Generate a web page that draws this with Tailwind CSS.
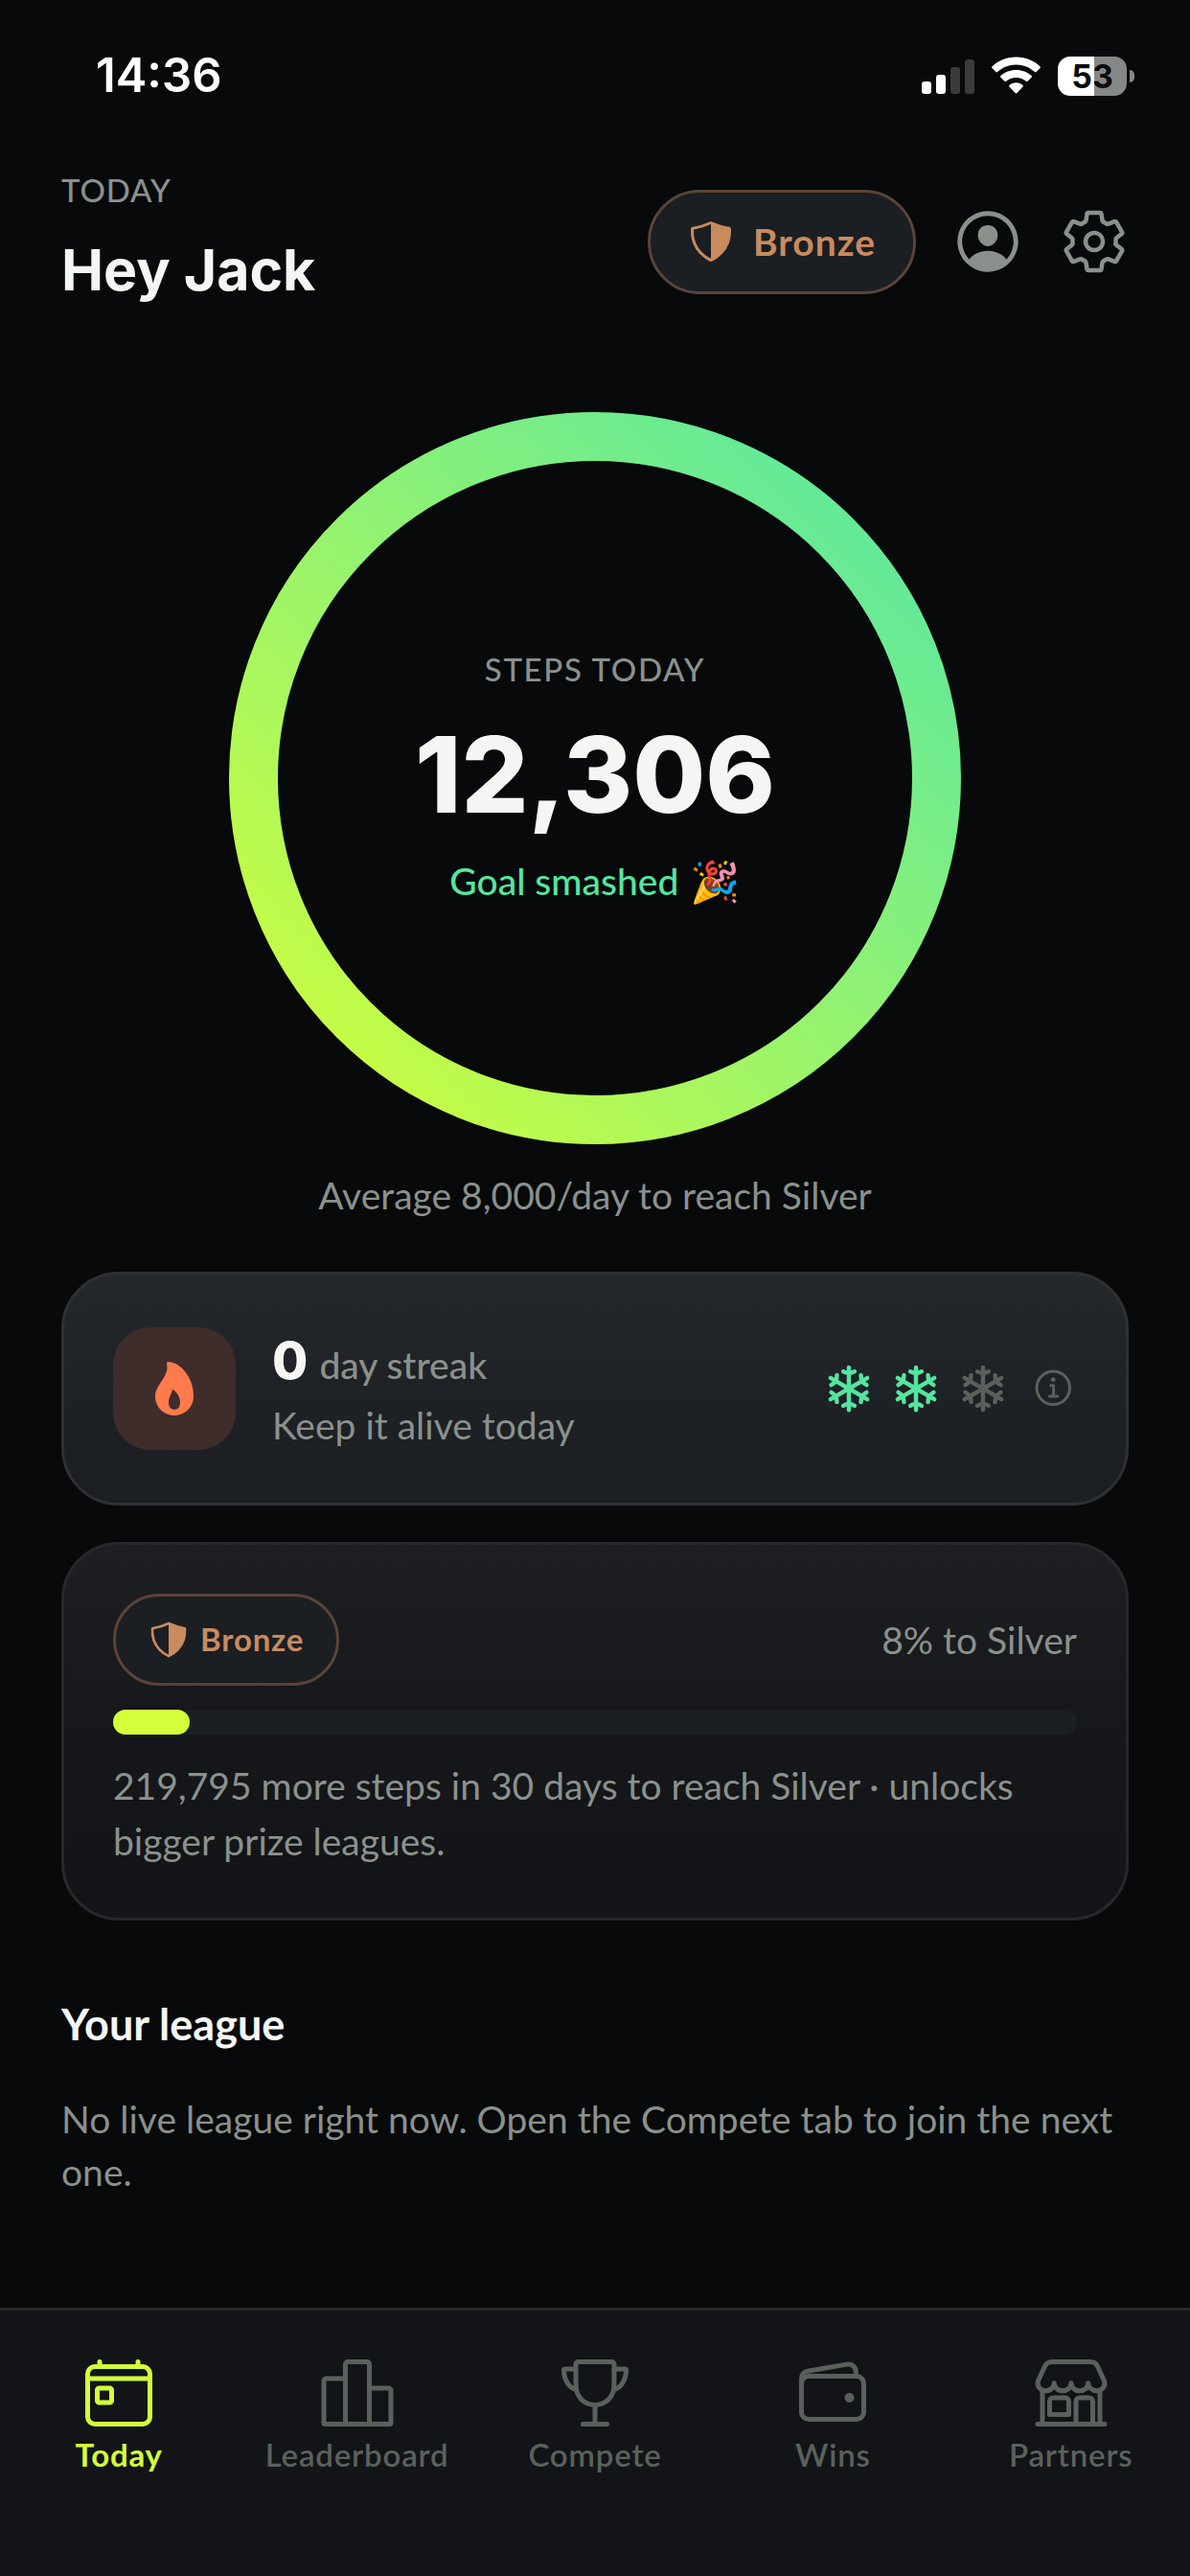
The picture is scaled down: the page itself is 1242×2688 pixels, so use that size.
<!DOCTYPE html>
<html lang="en">
<head>
    <meta charset="UTF-8">
    <meta name="viewport" content="width=device-width, initial-scale=1.0">
    <title>Today</title>
    <script src="https://cdn.jsdelivr.net/npm/@tailwindcss/browser@4"></script>
</head>
<body class="bg-[#07090b] text-[#f4f6f3] font-['Lato','Noto_Color_Emoji',sans-serif] min-h-screen flex flex-col">

    <!-- Shared icons -->
    <svg class="hidden">
        <symbol id="shield" viewBox="0 0 512 512">
            <path d="M463.1 112.37C373.68 96.33 336.71 84.45 256 48c-80.71 36.45-117.68 48.33-207.1 64.37C32.7 369.13 240.58 457.79 256 464c15.42-6.21 223.3-94.87 207.1-351.63z" fill="none" stroke="currentColor" stroke-width="32" stroke-linejoin="round"/>
            <path d="M256 48c80.71 36.45 117.68 48.33 207.1 64.37C479.3 369.13 271.42 457.79 256 464z" fill="currentColor"/>
        </symbol>
        <symbol id="snow" viewBox="0 0 512 512">
            <g id="snow-arm" fill="none" stroke="currentColor" stroke-width="44" stroke-linecap="round">
                <path d="M256 256V38M198 80a112 112 0 00116 0"/>
            </g>
            <use href="#snow-arm" transform="rotate(60 256 256)"/>
            <use href="#snow-arm" transform="rotate(120 256 256)"/>
            <use href="#snow-arm" transform="rotate(180 256 256)"/>
            <use href="#snow-arm" transform="rotate(240 256 256)"/>
            <use href="#snow-arm" transform="rotate(300 256 256)"/>
        </symbol>
    </svg>

    <!-- Status bar -->
    <div class="h-[142px] pt-4 pl-[100px] pr-[58px] flex items-center justify-between">
        <div class="font-['Inter',sans-serif] font-semibold text-[49px] leading-[60px] text-white">14:36</div>
        <div class="flex items-center gap-[18px]">
            <svg class="w-[55px] h-[41px]" viewBox="0 0 55 41" fill="#fff">
                <rect x="0" y="26" width="10" height="13" rx="3"/>
                <rect x="15" y="19" width="10" height="20" rx="3"/>
                <rect x="30" y="11" width="10" height="28" rx="3" fill="#3a3b3d"/>
                <rect x="45" y="3" width="10" height="36" rx="3" fill="#3a3b3d"/>
            </svg>
            <svg class="w-[51px] h-[41px]" viewBox="0 0 51 41" fill="#fff">
                <path d="M25.5.5C35.5.5 44.500 4.400 50.600 10.500Q51.300 11.300 50.600 12.100L46.600 16.100Q45.700 16.900 44.900 16.100C39.900 11.300 33 8.500 25.500 8.500S11.100 11.300 6.100 16.100Q5.300 16.900 4.400 16.100L.4 12.100Q-.3 11.300 .4 10.500C6.500 4.400 15.500 .5 25.500 .5z"/>
                <path d="M25.500 14C31.700 14 37.400 16.300 41.600 20.100Q42.400 20.900 41.600 21.700L37.500 25.800Q36.700 26.500 35.900 25.800C33.100 23.300 29.500 21.900 25.500 21.900S17.900 23.300 15.100 25.800Q14.300 26.500 13.500 25.800L9.400 21.700Q8.600 20.900 9.400 20.100C13.600 16.300 19.300 14 25.500 14z"/>
                <path d="M25.500 27.300C28.200 27.300 30.700 28.300 32.600 29.900Q33.500 30.700 32.600 31.600L26.400 38Q25.500 38.900 24.600 38L18.400 31.600Q17.500 30.700 18.400 29.900C20.300 28.300 22.800 27.300 25.500 27.300z"/>
            </svg>
            <div class="flex items-center gap-[3px]">
                <div class="w-[72px] h-[41px] rounded-[13px] bg-linear-to-r from-white from-53% to-[#868887] to-53% flex items-center justify-center font-['Inter',sans-serif] font-bold text-[34px] leading-[41px] text-[#0a0b0c]">53</div>
                <div class="w-[5px] h-[13px] rounded-r-full bg-[#868887]"></div>
            </div>
        </div>
    </div>

    <!-- Header -->
    <header class="px-16 pt-9 flex items-center justify-between">
        <div>
            <p class="text-[33px] leading-10 font-medium tracking-wide text-[#8a918c]">TODAY</p>
            <h1 class="mt-5 font-['Inter',sans-serif] font-bold text-[59px] leading-[88px]">Hey Jack</h1>
        </div>
        <div class="flex items-center gap-9">
            <button class="h-[109px] px-[39px] flex items-center gap-5 rounded-full border-3 border-[#5a4437] bg-[#1b1e23] text-[#c98b5e] text-[39px] font-bold tracking-wide">
                <svg class="size-12"><use href="#shield"/></svg>
                Bronze
            </button>
            <button aria-label="Profile" class="text-[#8a918c]">
                <svg class="size-[78px]" viewBox="0 0 512 512" fill="currentColor">
                    <path d="M258.9 48C141.92 46.42 46.42 141.92 48 258.9c1.56 112.19 92.91 203.54 205.1 205.1 117 1.6 212.48-93.9 210.88-210.88C462.44 140.91 371.09 49.56 258.9 48zm126.42 327.25a4 4 0 01-6.14-.32 124.27 124.27 0 00-32.35-29.59C321.37 329 289.11 320 256 320s-65.37 9-90.83 25.34a124.24 124.24 0 00-32.35 29.58 4 4 0 01-6.14.32A175.32 175.32 0 0180 259c-1.63-97.31 78.22-178.76 175.57-179S432 158.81 432 256a175.32 175.32 0 01-46.68 119.25z"/>
                    <path d="M256 144c-19.72 0-37.55 7.39-50.22 20.82s-19 32-17.57 51.93C191.11 256 221.52 288 256 288s64.83-32 67.79-71.24c1.48-19.74-4.8-38.14-17.68-51.82C293.39 151.44 275.59 144 256 144z"/>
                </svg>
            </button>
            <button aria-label="Settings" class="text-[#8a918c]">
                <svg class="size-[72px]" viewBox="0 0 512 512" fill="none" stroke="currentColor" stroke-width="32" stroke-linecap="round" stroke-linejoin="round">
                    <path d="M262.29 192.31a64 64 0 1057.4 57.4 64.13 64.13 0 00-57.4-57.4zM416.39 256a154.34 154.34 0 01-1.53 20.79l45.21 35.46a10.81 10.81 0 012.45 13.75l-42.77 74a10.81 10.81 0 01-13.14 4.59l-44.9-18.08a16.11 16.11 0 00-15.17 1.75A164.48 164.48 0 01325 400.8a15.94 15.94 0 00-8.82 12.14l-6.73 47.89a11.08 11.08 0 01-10.68 9.17h-85.54a11.11 11.11 0 01-10.69-8.87l-6.72-47.82a16.07 16.07 0 00-9-12.22 155.3 155.3 0 01-21.46-12.57 16 16 0 00-15.11-1.71l-44.89 18.07a10.81 10.81 0 01-13.14-4.58l-42.77-74a10.8 10.8 0 012.45-13.75l38.21-30a16.05 16.05 0 006-14.08c-.36-4.17-.58-8.33-.58-12.5s.21-8.27.58-12.35a16 16 0 00-6.07-13.94l-38.19-30A10.81 10.81 0 0149.48 186l42.77-74a10.81 10.81 0 0113.14-4.59l44.9 18.08a16.11 16.11 0 0015.17-1.75A164.48 164.48 0 01187 111.2a15.94 15.94 0 008.82-12.14l6.73-47.89A11.08 11.08 0 01213.23 42h85.54a11.11 11.11 0 0110.69 8.87l6.72 47.82a16.07 16.07 0 009 12.22 155.3 155.3 0 0121.46 12.57 16 16 0 0015.11 1.71l44.89-18.07a10.81 10.81 0 0113.14 4.58l42.77 74a10.8 10.8 0 01-2.45 13.75l-38.21 30a16.05 16.05 0 00-6.05 14.08c.33 4.14.55 8.3.55 12.47z"/>
                </svg>
            </button>
        </div>
    </header>

    <main class="flex-1 px-16 pb-16">
        <!-- Step ring -->
        <section class="mt-[104px] flex flex-col items-center">
            <div class="grid place-items-center">
                <svg class="size-[764px] col-start-1 row-start-1" viewBox="0 0 764 764">
                    <defs>
                        <linearGradient id="ring" x1="0" y1="1" x2="1" y2="0">
                            <stop offset="0" stop-color="#d4ff3a"/>
                            <stop offset="1" stop-color="#54e6a5"/>
                        </linearGradient>
                    </defs>
                    <circle cx="382" cy="382" r="356.5" fill="none" stroke="url(#ring)" stroke-width="51"/>
                </svg>
                <div class="col-start-1 row-start-1 flex flex-col items-center">
                    <p class="text-[33px] leading-10 font-medium tracking-wider text-[#8a918c]">STEPS TODAY</p>
                    <p class="mt-7 font-['Inter',sans-serif] font-extrabold text-[110px] leading-[124px]">12,306</p>
                    <p class="mt-[22px] flex items-center gap-3 text-[39px] leading-[54px] font-medium text-[#56e5a0]">
                        Goal smashed <span class="text-[42px]">🎉</span>
                    </p>
                </div>
            </div>
            <p class="mt-[26px] text-[39px] leading-[54px] text-[#8a918c]">Average 8,000/day to reach Silver</p>
        </section>

        <!-- Streak -->
        <section class="mt-[53px] px-[51px] py-[54px] flex items-center gap-[38px] rounded-[60px] border-3 border-[#2f3034] bg-linear-to-b from-[#25292b] via-[#1e2126] to-[#1b1e23]">
            <div class="size-32 -my-4 grid place-items-center rounded-[39px] bg-[#3e2d2b] text-[#ff7a4d]">
                <svg class="size-16" viewBox="0 0 512 512" fill="currentColor">
                    <path d="M394.23 197.56a300.43 300.43 0 00-53.37-90C301.2 61.65 249.05 32 208 32a16 16 0 00-15.48 20c13.87 53-14.88 97.07-45.31 143.72C122 234.36 96 274.27 96 320c0 88.22 71.78 160 160 160s160-71.78 160-160c0-43.3-7.32-84.49-21.77-122.44zM288.33 418.69C278 429.69 265.05 432 256 432s-22-2.31-32.33-13.31S208 390.24 208 368c0-25.14 8.82-44.28 17.34-62.78 4.95-10.74 10-21.67 13-33.37a8 8 0 0112.49-4.51A126.48 126.48 0 01275 292c18.17 24 29 52.42 29 76 0 22.24-5.42 39.77-15.67 50.69z"/>
                </svg>
            </div>
            <div class="flex-1 flex flex-col gap-1 text-[39px] leading-[54px] text-[#8a918c]">
                <p class="flex items-baseline gap-3 font-medium">
                    <span class="font-['Inter',sans-serif] font-extrabold text-[54px] leading-[72px] text-[#f4f6f3]">0</span>
                    day streak
                </p>
                <p>Keep it alive today</p>
            </div>
            <div class="flex items-center gap-[18px] text-[#56e5a0]">
                <svg class="size-[52px]"><use href="#snow"/></svg>
                <svg class="size-[52px]"><use href="#snow"/></svg>
                <svg class="size-[52px] text-[#5a615c]"><use href="#snow"/></svg>
                <button aria-label="About streak freezes" class="ml-1.5 text-[#5a615c]">
                    <svg class="size-12" viewBox="0 0 512 512" fill="none" stroke="currentColor" stroke-width="32" stroke-linecap="round" stroke-linejoin="round">
                        <circle cx="248" cy="248" r="184"/>
                        <path d="M220 220h32v116M208 340h88"/>
                        <circle cx="248" cy="156" r="26" fill="currentColor" stroke="none"/>
                    </svg>
                </button>
            </div>
        </section>

        <!-- Tier progress -->
        <section class="mt-[38px] p-[51px] rounded-[60px] border-3 border-[#27282b] bg-linear-to-b from-[#1e1f23] via-[#15171a] to-[#121418]">
            <div class="flex items-center justify-between">
                <div class="h-24 px-[34px] flex items-center gap-3 rounded-full border-3 border-[#5a4437] bg-[#1b1e23] text-[#c98b5e] text-[33px] font-bold tracking-wide">
                    <svg class="size-[42px]"><use href="#shield"/></svg>
                    Bronze
                </div>
                <p class="text-[39px] leading-[54px] text-[#8a918c]">8% to Silver</p>
            </div>
            <div class="mt-[25px] h-[26px] rounded-full bg-[#1b1f24]">
                <div class="h-full rounded-full bg-[#d4ff3a]" style="width: 8%"></div>
            </div>
            <p class="mt-6 text-[39px] leading-[58px] text-[#8a918c]">219,795 more steps in 30 days to reach Silver · unlocks bigger prize leagues.</p>
        </section>

        <!-- League -->
        <section class="mt-[78px]">
            <h2 class="text-[45px] leading-[60px] font-bold">Your league</h2>
            <p class="mt-[42px] text-[39px] leading-[55px] text-[#8a918c]">No live league right now. Open the Compete tab to join the next one.</p>
        </section>
    </main>

    <!-- Tab bar -->
    <nav class="h-[280px] pt-[46px] grid grid-cols-5 items-start border-t-3 border-[#27292b] bg-[#121418] text-[33px] leading-10 font-semibold tracking-wide text-[#5a615c]">
        <a href="#today" class="flex flex-col items-center gap-1 font-bold text-[#d4ff3a]">
            <svg class="size-20" viewBox="0 0 512 512" fill="none" stroke="currentColor" stroke-width="32" stroke-linecap="round" stroke-linejoin="round">
                <rect x="48" y="80" width="416" height="384" rx="48"/>
                <path d="M128 48v32M384 48v32M464 160H48"/>
                <rect x="112" y="224" width="96" height="96" rx="13"/>
            </svg>
            Today
        </a>
        <a href="#leaderboard" class="flex flex-col items-center gap-1">
            <svg class="size-20" viewBox="0 0 512 512" fill="none" stroke="currentColor" stroke-width="32" stroke-linecap="round" stroke-linejoin="round">
                <path d="M176 160H48a16 16 0 00-16 16v280a8 8 0 008 8h136zM320 48H192a16 16 0 00-16 16v400h160V64a16 16 0 00-16-16zM464 224H336v240h136a8 8 0 008-8V240a16 16 0 00-16-16z"/>
            </svg>
            Leaderboard
        </a>
        <a href="#compete" class="flex flex-col items-center gap-1">
            <svg class="size-20" viewBox="0 0 512 512" fill="none" stroke="currentColor" stroke-width="32" stroke-linecap="round" stroke-linejoin="round">
                <path d="M176 464h160M256 464V336M256 336c74 0 126-56 127-126 1-52 1-104 1-146a16 16 0 00-16-16H144a16 16 0 00-16 16c0 41 0 94 1 146 1 70 53 126 127 126z"/>
                <path d="M128 96H56a8 8 0 00-8 8c0 60 33 118 80 128M384 96h72a8 8 0 018 8c0 60-33 118-80 128"/>
            </svg>
            Compete
        </a>
        <a href="#wins" class="flex flex-col items-center gap-1">
            <svg class="size-20" viewBox="0 0 512 512" fill="none" stroke="currentColor" stroke-width="32" stroke-linecap="round" stroke-linejoin="round">
                <rect x="48" y="144" width="416" height="288" rx="48"/>
                <path d="M411.36 144v-30A50 50 0 00352 64.9L88.64 109.85A50 50 0 0048 159v49"/>
                <circle cx="368" cy="288" r="32" fill="currentColor" stroke="none"/>
            </svg>
            Wins
        </a>
        <a href="#partners" class="flex flex-col items-center gap-1">
            <svg class="size-20" viewBox="0 0 512 512" fill="none" stroke="currentColor" stroke-width="32" stroke-linecap="round" stroke-linejoin="round">
                <path d="M448 448V240M64 240v208M382.47 48H129.53c-21.79 0-41.47 12-49.93 30.46L36.3 173c-14.58 31.81 9.63 67.85 47.19 69h2c31.4 0 56.85-25.18 56.85-52.23 0 27 25.46 52.23 56.86 52.23s56.8-23.38 56.8-52.23c0 27 25.45 52.23 56.85 52.23s56.86-23.38 56.86-52.23c0 28.85 25.45 52.23 56.85 52.23h1.95c37.56-1.17 61.77-37.21 47.19-69l-43.3-94.54C423.94 60 404.26 48 382.47 48zM32 464h448M136 288h80a24 24 0 0124 24v88H112v-88a24 24 0 0124-24zM288 464V312a24 24 0 0124-24h64a24 24 0 0124 24v152"/>
            </svg>
            Partners
        </a>
    </nav>
</body>
</html>
